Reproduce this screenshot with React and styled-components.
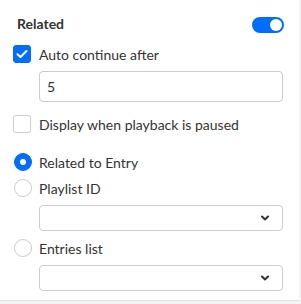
import React from "react";
import styled, { createGlobalStyle } from "styled-components";

const Global = createGlobalStyle`
  html, body { margin: 0; padding: 0; background: #f4f4f4; }
  body { font-family: Lato, "Open Sans", sans-serif; color: #333333; }
  * { box-sizing: border-box; }
`;

const Panel = styled.div`
  width: 299px;
  height: 301px;
  background: #ffffff;
  border-bottom: 1px solid #e2e2e2;
  padding: 13px 16px 0 13px;
  display: flex;
  flex-direction: column;
`;

const Header = styled.div`
  height: 20px;
  display: flex;
  align-items: center;
  justify-content: space-between;
  padding-left: 4px;
`;

const Title = styled.div`
  font-size: 14px;
  font-weight: 700;
  color: #333333;
`;

const Toggle = styled.div`
  width: 32px;
  height: 16px;
  border-radius: 8px;
  background: #006efa;
  position: relative;
  margin-top: 3px;
  margin-right: -1px;
  &::after {
    content: "";
    position: absolute;
    right: 2px;
    top: 2px;
    width: 12px;
    height: 12px;
    border-radius: 50%;
    background: #ffffff;
  }
`;

const Row = styled.label`
  display: flex;
  align-items: center;
  height: 18px;
  gap: 8px;
  margin-top: ${(p) => p.$mt}px;
  font-size: 14px;
  color: #333333;
`;

const Box = styled.span`
  width: 18px;
  height: 18px;
  border-radius: 3px;
  flex: none;
  display: flex;
  align-items: center;
  justify-content: center;
  background: ${(p) => (p.$checked ? "#006efa" : "#ffffff")};
  border: 1px solid ${(p) => (p.$checked ? "#006efa" : "#cccccc")};
`;

const Radio = styled.span`
  width: 18px;
  height: 18px;
  border-radius: 50%;
  flex: none;
  margin-left: 1px;
  margin-right: -1px;
  background: ${(p) => (p.$checked ? "#006efa" : "#ffffff")};
  border: 1px solid ${(p) => (p.$checked ? "#006efa" : "#cccccc")};
  display: flex;
  align-items: center;
  justify-content: center;
  &::after {
    content: "";
    display: ${(p) => (p.$checked ? "block" : "none")};
    width: 6px;
    height: 6px;
    border-radius: 50%;
    background: #ffffff;
  }
`;

const Field = styled.div`
  margin-left: 26px;
  margin-top: ${(p) => p.$mt}px;
  height: ${(p) => p.$h}px;
  border: 1px solid #cccccc;
  border-radius: 4px;
  display: flex;
  align-items: center;
  justify-content: space-between;
  padding: 0 13px 0 7px;
  font-size: 14px;
  color: #333333;
`;

const Chevron = () => (
  <svg width="8" height="6" viewBox="0 0 8 6">
    <path d="M1 1.5 L4 4.5 L7 1.5" fill="none" stroke="#333" strokeWidth="2" strokeLinecap="round" strokeLinejoin="round" />
  </svg>
);

const Check = () => (
  <svg width="12" height="10" viewBox="0 0 12 10">
    <path d="M1.5 5.2 L4.5 8 L10.5 2" fill="none" stroke="#fff" strokeWidth="2" strokeLinecap="round" strokeLinejoin="round" />
  </svg>
);

export default function App() {
  return (
    <>
      <Global />
      <Panel>
        <Header>
          <Title>Related</Title>
          <Toggle />
        </Header>
        <Row $mt={12}>
          <Box $checked><Check /></Box>
          Auto continue after
        </Row>
        <Field $mt={8} $h={31}>5</Field>
        <Row $mt={13}>
          <Box />
          Display when playback is paused
        </Row>
        <Row $mt={20}>
          <Radio $checked />
          Related to Entry
        </Row>
        <Row $mt={8}>
          <Radio />
          Playlist ID
        </Row>
        <Field $mt={8} $h={26}>
          <span />
          <Chevron />
        </Field>
        <Row $mt={8}>
          <Radio />
          Entries list
        </Row>
        <Field $mt={8} $h={26}>
          <span />
          <Chevron />
        </Field>
      </Panel>
    </>
  );
}
